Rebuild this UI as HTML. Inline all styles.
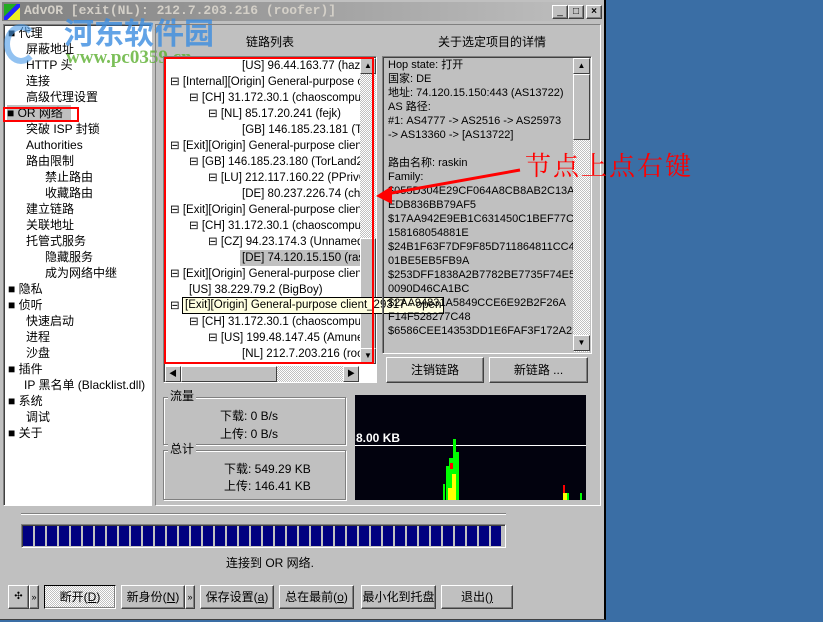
<!DOCTYPE html>
<html><head><meta charset="utf-8"><style>
*{margin:0;padding:0;box-sizing:border-box}
body{width:823px;height:622px;background:#3a6ea5;position:relative;overflow:hidden;font:12px "Liberation Sans","Noto Sans CJK SC",sans-serif;color:#000}
.a{position:absolute;white-space:nowrap}
.win{position:absolute;left:0;top:0;width:606px;height:620px;background:#c0c0c0;border-right:2px solid #000;border-bottom:1px solid #404040}
.sunk{border:1px solid;border-color:#808080 #fff #fff #808080;box-shadow:inset 1px 1px 0 #404040}
.btn{position:absolute;background:#c0c0c0;border:1px solid;border-color:#fff #404040 #404040 #fff;box-shadow:inset -1px -1px 0 #808080;text-align:center;line-height:22px}
.grp{position:absolute;border:1px solid #808080;box-shadow:1px 1px 0 #fff,inset 1px 1px 0 #fff}
.t{position:absolute;white-space:nowrap;line-height:16px}
.clip .t{font-size:11.5px}
.sb{position:absolute;background:repeating-conic-gradient(#c0c0c0 0 25%,#fff 0 50%) 0 0/2px 2px}
.arr{position:absolute;width:16px;height:16px;background:#c0c0c0;border:1px solid;border-color:#fff #404040 #404040 #fff;font-size:8px;text-align:center;line-height:14px}
</style></head><body>
<div class="win">
 <div class="a" style="left:2px;top:2px;width:602px;height:19px;background:linear-gradient(90deg,#808080,#c0c0c0)"></div>
 <div class="a" style="left:4px;top:4px;width:16px;height:16px;background:linear-gradient(135deg,#2a2 0 40%,#22f 40% 60%,#ee2 60%)"></div>
 <div class="a" style="left:24px;top:3px;color:#d4d0c8;font:bold 13px 'Liberation Mono',monospace;line-height:16px">AdvOR [exit(NL): 212.7.203.216 (roofer)]</div>
 <div class="btn" style="left:552px;top:5px;width:16px;height:14px;line-height:12px;font-size:10px">_</div>
 <div class="btn" style="left:568px;top:5px;width:16px;height:14px;line-height:12px;font-size:10px">□</div>
 <div class="btn" style="left:586px;top:5px;width:16px;height:14px;line-height:12px;font-size:10px;font-weight:bold">×</div>

 <!-- left nav -->
 <div class="a sunk" style="left:3px;top:24px;width:149px;height:482px;background:#fff"></div>
 <div class="t" style="left:8px;top:25px">■ 代理</div>
 <div class="t" style="left:26px;top:41px">屏蔽地址</div>
 <div class="t" style="left:26px;top:57px">HTTP 头</div>
 <div class="t" style="left:26px;top:73px">连接</div>
 <div class="t" style="left:26px;top:89px">高级代理设置</div>
 <div class="t" style="left:7px;top:105px;background:#c0c0c0;padding-right:8px">■ OR 网络</div>
 <div class="a" style="left:3px;top:107px;width:76px;height:15px;border:2px solid red"></div>
 <div class="t" style="left:26px;top:121px">突破 ISP 封锁</div>
 <div class="t" style="left:26px;top:137px">Authorities</div>
 <div class="t" style="left:26px;top:153px">路由限制</div>
 <div class="t" style="left:45px;top:169px">禁止路由</div>
 <div class="t" style="left:45px;top:185px">收藏路由</div>
 <div class="t" style="left:26px;top:201px">建立链路</div>
 <div class="t" style="left:26px;top:217px">关联地址</div>
 <div class="t" style="left:26px;top:233px">托管式服务</div>
 <div class="t" style="left:45px;top:249px">隐藏服务</div>
 <div class="t" style="left:45px;top:265px">成为网络中继</div>
 <div class="t" style="left:8px;top:281px">■ 隐私</div>
 <div class="t" style="left:8px;top:297px">■ 侦听</div>
 <div class="t" style="left:26px;top:313px">快速启动</div>
 <div class="t" style="left:26px;top:329px">进程</div>
 <div class="t" style="left:26px;top:345px">沙盘</div>
 <div class="t" style="left:8px;top:361px">■ 插件</div>
 <div class="t" style="left:24px;top:377px">IP 黑名单 (Blacklist.dll)</div>
 <div class="t" style="left:8px;top:393px">■ 系统</div>
 <div class="t" style="left:26px;top:409px">调试</div>
 <div class="t" style="left:8px;top:425px">■ 关于</div>

 <!-- watermark -->
 <div class="a" style="left:4px;top:24px;width:34px;height:40px;border-radius:50%;border:6px solid #4a9be8;border-right-color:transparent;opacity:.6"></div>
 <div class="a" style="left:64px;top:14px;color:#3c8de0;font:bold 30px 'Noto Sans CJK SC',sans-serif;opacity:.8;line-height:34px">河东软件园</div>
 <div class="a" style="left:66px;top:48px;color:#5cb030;font:bold 19px 'Liberation Serif',serif;opacity:.8;line-height:20px">www.pc0359.cn</div>

 <!-- main panel -->
 <div class="a" style="left:155px;top:24px;width:446px;height:482px;border:1px solid;border-color:#808080 #fff #fff #808080"></div>
 <div class="t" style="left:246px;top:34px">链路列表</div>
 <div class="t" style="left:438px;top:34px">关于选定项目的详情</div>

 <!-- tree -->
 <div class="a sunk" style="left:163px;top:56px;width:214px;height:327px;background:#fff"></div>
 <div class="a clip" style="left:165px;top:58px;width:195px;height:306px;overflow:hidden">
 <div class="t" style="left:77px;top:0px">[US] 96.44.163.77 (hazar</div>
 <div class="t" style="left:5px;top:16px">⊟ [Internal][Origin] General-purpose clie</div>
 <div class="t" style="left:24px;top:32px">⊟ [CH] 31.172.30.1 (chaoscompute</div>
 <div class="t" style="left:43px;top:48px">⊟ [NL] 85.17.20.241 (fejk)</div>
 <div class="t" style="left:77px;top:64px">[GB] 146.185.23.181 (To</div>
 <div class="t" style="left:5px;top:80px">⊟ [Exit][Origin] General-purpose client_</div>
 <div class="t" style="left:24px;top:96px">⊟ [GB] 146.185.23.180 (TorLand2)</div>
 <div class="t" style="left:43px;top:112px">⊟ [LU] 212.117.160.22 (PPrivCo</div>
 <div class="t" style="left:77px;top:128px">[DE] 80.237.226.74 (chac</div>
 <div class="t" style="left:5px;top:144px">⊟ [Exit][Origin] General-purpose client_</div>
 <div class="t" style="left:24px;top:160px">⊟ [CH] 31.172.30.1 (chaoscompute</div>
 <div class="t" style="left:43px;top:176px">⊟ [CZ] 94.23.174.3 (Unnamed)</div>
 <div class="t" style="left:75px;top:192px;background:#c0c0c0;padding:0 2px;width:130px">[DE] 74.120.15.150 (rask</div>
 <div class="t" style="left:5px;top:208px">⊟ [Exit][Origin] General-purpose client_</div>
 <div class="t" style="left:24px;top:224px">[US] 38.229.79.2 (BigBoy)</div>
 <div class="t" style="left:5px;top:240px">⊟</div>
 <div class="t" style="left:24px;top:256px">⊟ [CH] 31.172.30.1 (chaoscompute</div>
 <div class="t" style="left:43px;top:272px">⊟ [US] 199.48.147.45 (Amunet</div>
 <div class="t" style="left:77px;top:288px">[NL] 212.7.203.216 (roof</div>
 </div>
 <div class="sb" style="left:360px;top:58px;width:16px;height:306px"></div>
 <div class="arr" style="left:360px;top:58px">▲</div>
 <div class="arr" style="left:360px;top:238px;height:112px"></div>
 <div class="arr" style="left:360px;top:348px">▼</div>
 <div class="sb" style="left:165px;top:366px;width:194px;height:16px"></div>
 <div class="arr" style="left:165px;top:366px">◀</div>
 <div class="arr" style="left:181px;top:366px;width:96px"></div>
 <div class="arr" style="left:343px;top:366px">▶</div>
 <div class="t" style="left:182px;top:297px;background:#ffffe1;border:1px solid #000;padding:0 2px;line-height:15px;font-size:11.5px">[Exit][Origin] General-purpose client_29317 - open</div>
 <div class="a" style="left:164px;top:57px;width:210px;height:307px;border:2px solid red"></div>

 <!-- details -->
 <div class="a sunk" style="left:382px;top:56px;width:210px;height:298px"></div>
 <div class="a clip" style="left:385px;top:58px;width:188px;height:294px;overflow:hidden">
 <div class="t" style="left:3px;top:0;line-height:14px;font-size:11px">Hop state: 打开<br>国家: DE<br>地址: 74.120.15.150:443 (AS13722)<br>AS 路径:<br>#1: AS4777 -&gt; AS2516 -&gt; AS25973<br>-&gt; AS13360 -&gt; [AS13722]<br><br>路由名称: raskin<br>Family:<br>$055D304E29CF064A8CB8AB2C13A<br>EDB836BB79AF5<br>$17AA942E9EB1C631450C1BEF77C<br>158168054881E<br>$24B1F63F7DF9F85D711864811CC4<br>01BE5EB5FB9A<br>$253DFF1838A2B7782BE7735F74E5<br>0090D46CA1BC<br>$2AA94831A5849CCE6E92B2F26A<br>F14F528277C48<br>$6586CEE14353DD1E6FAF3F172A23</div>
 </div>
 <div class="sb" style="left:573px;top:58px;width:17px;height:294px"></div>
 <div class="arr" style="left:573px;top:58px;width:17px">▲</div>
 <div class="arr" style="left:573px;top:74px;width:17px;height:66px"></div>
 <div class="arr" style="left:573px;top:335px;width:17px">▼</div>
 <div class="btn" style="left:386px;top:357px;width:98px;height:26px;line-height:24px">注销链路</div>
 <div class="btn" style="left:489px;top:357px;width:99px;height:26px;line-height:24px">新链路 ...</div>

 <!-- annotation -->
 <div class="a" style="left:525px;top:150px;color:red;font:26px 'Noto Serif CJK SC',serif;line-height:30px;letter-spacing:2px">节点上点右键</div>
 <svg class="a" style="left:370px;top:160px" width="160" height="50"><line x1="150" y1="10" x2="16" y2="34" stroke="red" stroke-width="3"/><polygon points="6,36 22,26 22,44" fill="red"/></svg>

 <!-- traffic -->
 <div class="grp" style="left:163px;top:397px;width:183px;height:48px"></div>
 <div class="t" style="left:168px;top:388px;background:#c0c0c0;padding:0 2px">流量</div>
 <div class="t" style="left:196px;top:408px;width:82px;text-align:right">下载: 0 B/s</div>
 <div class="t" style="left:196px;top:426px;width:82px;text-align:right">上传: 0 B/s</div>
 <div class="grp" style="left:163px;top:450px;width:183px;height:50px"></div>
 <div class="t" style="left:168px;top:441px;background:#c0c0c0;padding:0 2px">总计</div>
 <div class="t" style="left:196px;top:461px;width:120px;padding-left:28px">下载: 549.29 KB</div>
 <div class="t" style="left:196px;top:478px;width:120px;padding-left:28px">上传: 146.41 KB</div>
 <div class="a" style="left:355px;top:395px;width:231px;height:105px;background:#02020e"></div>
 <div class="a" style="left:355px;top:445px;width:231px;height:1px;background:#fff"></div>
 <div class="a" style="left:356px;top:431px;color:#fff;font:bold 12px 'Liberation Sans',sans-serif">8.00 KB</div>
 <div class="a" style="left:443px;top:484px;width:2px;height:16px;background:#0f0"></div>
 <div class="a" style="left:446px;top:466px;width:3px;height:34px;background:#0f0"></div>
 <div class="a" style="left:449px;top:458px;width:4px;height:42px;background:#0f0"></div>
 <div class="a" style="left:453px;top:439px;width:3px;height:61px;background:#0f0"></div>
 <div class="a" style="left:456px;top:452px;width:3px;height:48px;background:#0f0"></div>
 <div class="a" style="left:448px;top:488px;width:6px;height:12px;background:#ff0"></div>
 <div class="a" style="left:452px;top:474px;width:4px;height:26px;background:#ff0"></div>
 <div class="a" style="left:450px;top:463px;width:3px;height:6px;background:#f00"></div>
 <div class="a" style="left:563px;top:485px;width:2px;height:8px;background:#f00"></div>
 <div class="a" style="left:563px;top:493px;width:4px;height:7px;background:#ff0"></div>
 <div class="a" style="left:567px;top:493px;width:2px;height:7px;background:#0f0"></div>
 <div class="a" style="left:580px;top:493px;width:2px;height:7px;background:#0f0"></div>

 <!-- bottom -->
 <div class="a" style="left:21px;top:513px;width:485px;height:2px;border-top:1px solid #808080;border-bottom:1px solid #fff"></div>
 <div class="a sunk" style="left:21px;top:524px;width:485px;height:24px;background:#c0c0c0"></div>
 <div class="a" style="left:23px;top:526px;width:480px;height:20px;background:repeating-linear-gradient(90deg,#000080 0 10px,#c0c0c0 10px 12px)"></div>
 <div class="t" style="left:226px;top:555px">连接到 OR 网络.</div>
 <div class="btn" style="left:8px;top:585px;width:21px;height:24px;font-size:10px">✣</div>
 <div class="btn" style="left:29px;top:585px;width:10px;height:24px;font-size:9px">»</div>
 <div class="btn" style="left:44px;top:585px;width:72px;height:24px;background:repeating-conic-gradient(#c0c0c0 0 25%,#fff 0 50%) 0 0/2px 2px;border-color:#000 #fff #fff #000">断开(<u>D</u>)</div>
 <div class="btn" style="left:121px;top:585px;width:64px;height:24px">新身份(<u>N</u>)</div>
 <div class="btn" style="left:185px;top:585px;width:10px;height:24px;font-size:9px">»</div>
 <div class="btn" style="left:200px;top:585px;width:74px;height:24px">保存设置(<u>a</u>)</div>
 <div class="btn" style="left:279px;top:585px;width:75px;height:24px">总在最前(<u>o</u>)</div>
 <div class="btn" style="left:361px;top:585px;width:75px;height:24px">最小化到托盘</div>
 <div class="btn" style="left:441px;top:585px;width:72px;height:24px">退出(<u>)</u></div>
</div>
</body></html>
